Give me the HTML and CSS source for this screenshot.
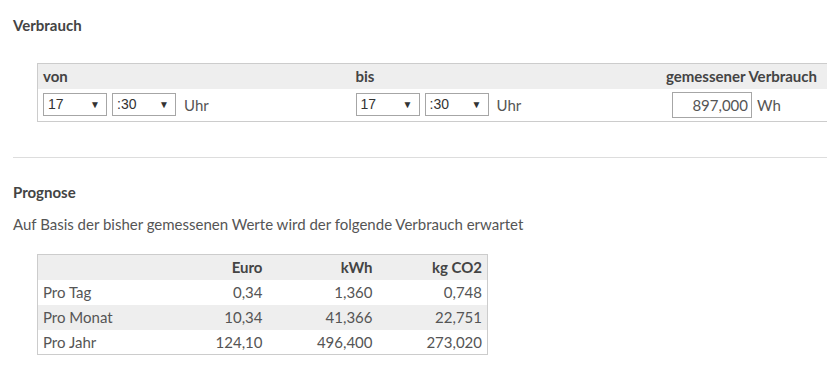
FILE: index.html
```html
<!DOCTYPE html>
<html lang="de">
<head>
    <meta charset="UTF-8">
    <title>Verbrauch</title>
    <link rel="stylesheet" href="styles.css">
</head>
<body>
    <main class="page">
        <h2 class="section-title first">Verbrauch</h2>

        <table class="range-table">
            <thead>
                <tr>
                    <th class="col-from">von</th>
                    <th class="col-to">bis</th>
                    <th class="col-usage">gemessener Verbrauch</th>
                </tr>
            </thead>
            <tbody>
                <tr>
                    <td>
                        <div class="time-pick">
                            <span class="select"><span class="select-value">17</span></span>
                            <span class="select"><span class="select-value">:30</span></span>
                            <span class="unit">Uhr</span>
                        </div>
                    </td>
                    <td>
                        <div class="time-pick">
                            <span class="select"><span class="select-value">17</span></span>
                            <span class="select"><span class="select-value">:30</span></span>
                            <span class="unit">Uhr</span>
                        </div>
                    </td>
                    <td class="col-usage">
                        <div class="usage-pick">
                            <input type="text" class="usage-input" value="897,000">
                            <span class="unit">Wh</span>
                        </div>
                    </td>
                </tr>
            </tbody>
        </table>

        <hr class="divider">

        <h2 class="section-title">Prognose</h2>
        <p class="intro">Auf Basis der bisher gemessenen Werte wird der folgende Verbrauch erwartet</p>

        <table class="forecast">
            <thead>
                <tr>
                    <th class="label"></th>
                    <th>Euro</th>
                    <th>kWh</th>
                    <th>kg CO2</th>
                </tr>
            </thead>
            <tbody>
                <tr>
                    <td class="label">Pro Tag</td>
                    <td>0,34</td>
                    <td>1,360</td>
                    <td>0,748</td>
                </tr>
                <tr class="stripe">
                    <td class="label">Pro Monat</td>
                    <td>10,34</td>
                    <td>41,366</td>
                    <td>22,751</td>
                </tr>
                <tr>
                    <td class="label">Pro Jahr</td>
                    <td>124,10</td>
                    <td>496,400</td>
                    <td>273,020</td>
                </tr>
            </tbody>
        </table>
    </main>
</body>
</html>
```

FILE: styles.css
```css
*{
    padding: 0;
    margin: 0;
    box-sizing: border-box;
}
body{
    background-color: #fff;
    color: #555;
    font-family: "Lato", "Liberation Sans", sans-serif;
    font-size: 15px;
    line-height: 18px;
}
.page{
    padding-left: 13px;
}
.section-title{
    font-size: 15px;
    font-weight: bold;
    color: #444;
    margin-top: 25px;
}
.section-title.first{
    margin-top: 16px;
}
.range-table{
    margin-top: 29px;
    margin-left: 24px;
    width: calc(100% - 24px);
    border-collapse: collapse;
    border: 1px solid #ccc;
    border-right: none;
    th{
        background-color: #eee;
        color: #444;
        font-weight: bold;
        text-align: left;
        height: 25px;
        padding: 0 5px;
    }
    td{
        height: 33px;
        padding: 0 5px;
    }
    .col-from{
        width: 313px;
    }
    .col-to{
        width: 310px;
    }
    .col-usage{
        text-align: right;
        padding-right: 10px;
    }
}
.time-pick, .usage-pick{
    display: flex;
    align-items: center;
    gap: 5px;
}
.select{
    position: relative;
    display: inline-block;
    width: 64px;
    height: 23px;
    border: 1px solid #a6a6a6;
    background-color: #fff;
    font-family: "Liberation Sans", Arial, sans-serif;
    font-size: 14px;
    color: #333;
}
.select-value{
    display: block;
    padding-left: 4px;
    line-height: 21px;
}
.select::after{
    content: "\25BC";
    position: absolute;
    right: 6px;
    top: 0;
    font-size: 10px;
    line-height: 21px;
    color: #333;
}
.unit{
    margin-left: 3px;
}
.usage-pick{
    justify-content: flex-end;
}
.usage-pick .unit{
    margin-left: 0;
    width: 60px;
    text-align: left;
}
.usage-input{
    width: 80px;
    height: 26px;
    border: 1px solid #a6a6a6;
    font-family: "Lato", "Liberation Sans", sans-serif;
    font-size: 15px;
    color: #555;
    text-align: right;
    padding-right: 3px;
}
.divider{
    margin-top: 35px;
    border: none;
    border-top: 1px solid #ddd;
}
.intro{
    margin-top: 14px;
}
.forecast{
    margin-top: 21px;
    margin-left: 24px;
    width: 450px;
    table-layout: fixed;
    border-collapse: collapse;
    border: 1px solid #ccc;
    th, td{
        width: 110px;
        height: 25px;
        padding: 0 5px;
        text-align: right;
    }
    th{
        background-color: #eee;
        color: #444;
        font-weight: bold;
    }
    .label{
        text-align: left;
        width: 120px;
    }
    .stripe td{
        background-color: #eee;
    }
}
```
